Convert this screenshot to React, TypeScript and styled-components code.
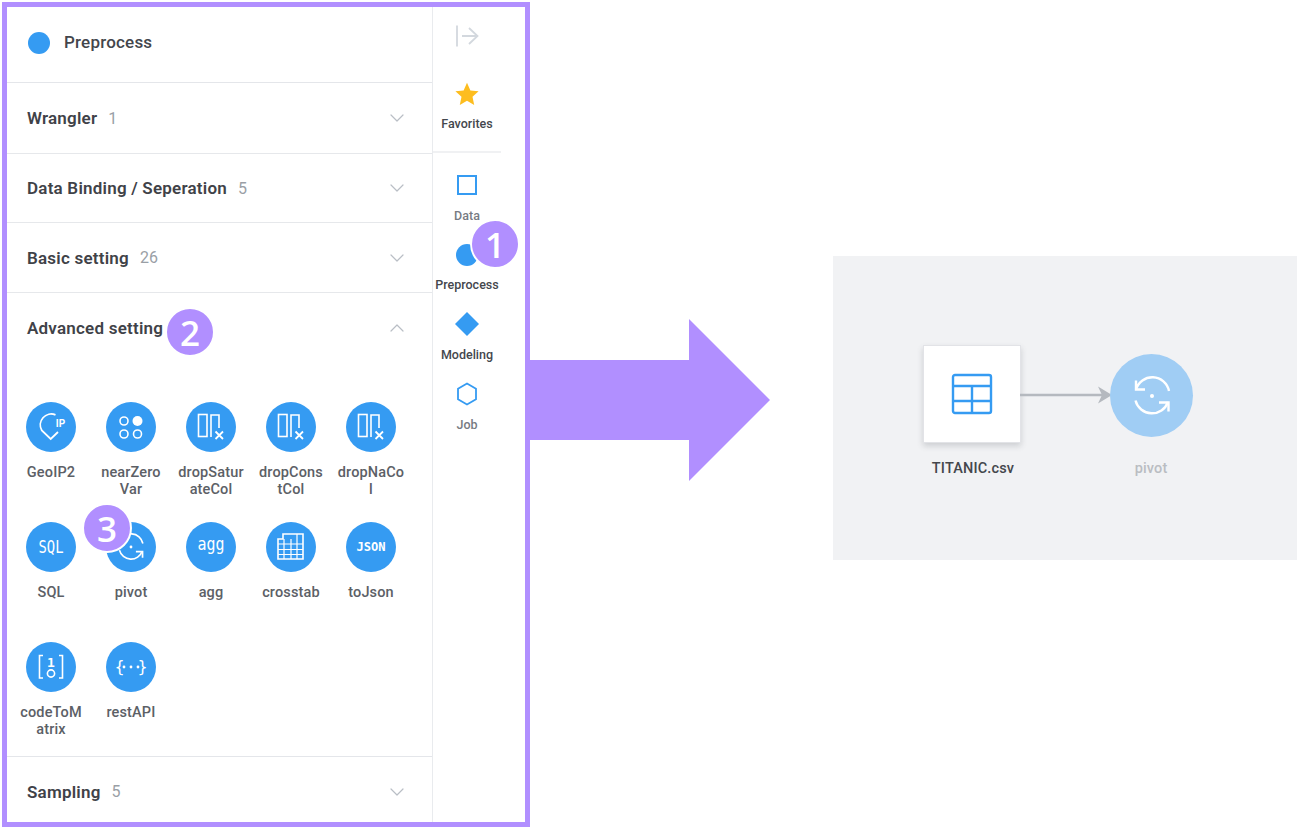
import React from "react";
import styled, { createGlobalStyle } from "styled-components";
import { ChevronDown, ChevronUp } from "lucide-react";

const PURPLE = "#b18fff";
const BLUE = "#359bf2";

const Global = createGlobalStyle`
  html, body { margin: 0; padding: 0; background: #fff; }
  body { font-family: Roboto, "Liberation Sans", sans-serif; overflow: hidden; }
  * { box-sizing: border-box; }
`;

const Stage = styled.div`
  width: 1311px;
  height: 828px;
  padding: 2px 0 0 2px;
  display: flex;
  align-items: flex-start;
`;

const Frame = styled.section`
  position: relative;
  width: 528px;
  height: 825px;
  border: 5px solid ${PURPLE};
  display: flex;
  overflow: hidden;
  background: #fff;
`;

const Panel = styled.div`
  width: 426px;
  height: 100%;
  border-right: 1px solid #e9ebee;
  overflow: hidden;
  display: flex;
  flex-direction: column;
  flex: none;
`;

const PanelHead = styled.header`
  height: 76px;
  flex: none;
  display: flex;
  align-items: center;
  gap: 14px;
  padding: 0 0 6px 21px;
  border-bottom: 1px solid #e4e6ea;
`;

const HeadDot = styled.span`
  width: 22px;
  height: 22px;
  margin-top: 2px;
  border-radius: 50%;
  background: ${BLUE};
`;

const HeadTitle = styled.h1`
  margin: 0;
  font-size: 17px;
  letter-spacing: 0.2px;
  font-weight: 500;
  color: #43464c;
`;

const Row = styled.div<{ $h: number }>`
  height: ${(p) => p.$h}px;
  flex: none;
  display: flex;
  align-items: center;
  padding: 0 23px 0 20px;
  border-bottom: 1px solid #e6e8eb;
`;

const OpenRow = styled(Row)`
  border-bottom: none;
`;

const RowTitle = styled.span`
  font-size: 17px;
  letter-spacing: 0.22px;
  font-weight: 600;
  color: #3f4248;
`;

const RowCount = styled.span`
  margin-left: 11px;
  font-size: 16px;
  color: #9a9fa6;
  flex: 1;
`;

const Grid = styled.div`
  flex: none;
  height: 394px;
  padding: 39px 0 0 4px;
  display: grid;
  grid-template-columns: repeat(5, 80px);
  grid-template-rows: 120px 120px 115px;
  border-bottom: 1px solid #e4e6ea;
`;

const Tool = styled.div`
  display: flex;
  flex-direction: column;
  align-items: center;
`;

const ToolDisc = styled.div`
  width: 50px;
  height: 50px;
  border-radius: 50%;
  background: ${BLUE};
`;

const ToolName = styled.div`
  margin-top: 12px;
  width: 78px;
  font-size: 14.5px;
  letter-spacing: 0.15px;
  line-height: 17px;
  font-weight: 500;
  color: #5c6066;
  text-align: center;
  white-space: pre-line;
`;

const Rail = styled.nav`
  flex: 1;
  display: flex;
  flex-direction: column;
`;

const RailTop = styled.div`
  width: 68px;
  height: 146px;
  flex: none;
  display: flex;
  flex-direction: column;
  align-items: center;
  padding-top: 17px;
  border-bottom: 2px solid #f0f1f3;
`;

const RailItem = styled.div`
  width: 68px;
  height: 69.7px;
  flex: none;
  display: flex;
  flex-direction: column;
  align-items: center;
  padding-top: 20px;
`;

const RailIcon = styled.div`
  width: 24px;
  height: 24px;
  flex: none;
  display: flex;
  align-items: center;
  justify-content: center;
`;

const RailLabel = styled.span<{ $active?: boolean }>`
  margin-top: 11.5px;
  line-height: 14px;
  font-size: 12.5px;
  font-weight: 500;
  white-space: nowrap;
  color: ${(p) => (p.$active ? "#44474d" : "#777b82")};
`;

const FavLabel = styled(RailLabel)`
  margin-top: 11px;
`;

const Collapse = styled.div`
  height: 24px;
  margin-bottom: 34px;
`;

const Badge = styled.span<{ $x: number; $y: number }>`
  position: absolute;
  left: ${(p) => p.$x}px;
  top: ${(p) => p.$y}px;
  width: 50px;
  height: 50px;
  border-radius: 50%;
  border: 2px solid #fff;
  background: ${PURPLE};
  color: #fff;
  font-family: "Open Sans", "Noto Sans", sans-serif;
  font-size: 35px;
  line-height: 1;
  font-weight: 600;
  display: flex;
  align-items: center;
  justify-content: center;
`;

const BigArrow = styled.svg`
  width: 243px;
  height: 162px;
  margin: 317px 0 0 -3px;
  flex: none;
  display: block;
`;

const Canvas = styled.section`
  position: relative;
  margin: 254px 0 0 63px;
  width: 464px;
  height: 304px;
  background: #f1f2f4;
  flex: none;
`;

const DataNode = styled.div`
  position: absolute;
  left: 90px;
  top: 89px;
  width: 98px;
  height: 98px;
  background: #fff;
  border: 1px solid #e2e3e7;
  box-shadow: 0 3px 6px rgba(60, 65, 75, 0.2);
  display: flex;
  align-items: center;
  justify-content: center;
`;

const PivotNode = styled.div`
  position: absolute;
  left: 277px;
  top: 98px;
  width: 83px;
  height: 83px;
  border-radius: 50%;
  background: #a0cdf4;
  display: flex;
  align-items: center;
  justify-content: center;
`;

const Link = styled.svg`
  position: absolute;
  left: 187px;
  top: 130px;
  width: 92px;
  height: 18px;
`;

const NodeLabel = styled.span<{ $x: number; $faded?: boolean }>`
  position: absolute;
  left: ${(p) => p.$x}px;
  top: 204px;
  width: 120px;
  margin-left: -60px;
  text-align: center;
  font-size: 14.5px;
  letter-spacing: 0.15px;
  line-height: 17px;
  font-weight: 500;
  color: ${(p) => (p.$faded ? "#babdc2" : "#44474c")};
`;

const PivotGlyph = ({ size }: { size: number }) => (
  <svg width={size} height={size} viewBox="0 0 40 40" fill="none" stroke="#fff" strokeWidth="2.4">
    <path d="M4 13.5A17 17 0 0 1 37 15" />
    <path d="M4 4.5V13.5H13" />
    <path d="M3.5 24.5A17 17 0 0 0 36 26" />
    <path d="M36.5 35.5V26.5H27" />
    <circle cx="20" cy="20" r="2" fill="#fff" stroke="none" />
  </svg>
);

const line = { fill: "none", stroke: "#fff", strokeWidth: 1.6 } as const;
const mono = { fill: "#fff", textAnchor: "middle", fontFamily: '"DejaVu Sans Mono", monospace' } as const;

const Drop = () => (
  <g {...line}>
    <rect x="12.5" y="12.5" width="8.5" height="22" />
    <path d="M25 35V13H33V26" />
    <path d="M29.5 29.5L37 37M37 29.5L29.5 37" strokeWidth="1.8" />
  </g>
);

const glyphs: Record<string, React.ReactNode> = {
  geo: (
    <>
      <path {...line} strokeWidth={1.8} d="M29.5 12.8A11 11 0 0 0 15.8 28.5L24.7 37L32 30" />
      <text fill="#fff" textAnchor="middle" fontFamily="Roboto, sans-serif" fontWeight={700} x="34.5" y="25" fontSize="10">IP</text>
    </>
  ),
  near: (
    <>
      <circle {...line} cx="18" cy="19" r="4" />
      <circle cx="31.5" cy="19" r="5" fill="#fff" />
      <circle {...line} cx="18" cy="32" r="4" />
      <circle {...line} cx="31.5" cy="32" r="4" />
    </>
  ),
  drop: <Drop />,
  sql: <text {...mono} x="25" y="31" fontSize="17" textLength="25" lengthAdjust="spacingAndGlyphs">SQL</text>,
  pivot: (
    <g transform="translate(11 11)">
      <PivotGlyph size={28} />
    </g>
  ),
  agg: <text {...mono} x="25" y="28" fontSize="18" textLength="27" lengthAdjust="spacingAndGlyphs">agg</text>,
  cross: (
    <g {...line}>
      <path d="M17 12H37V37H12V17H17Z" />
      <path d="M12 22H37M12 27.5H37M12 32.5H37M18 17V37M25 17V37M31 12V37" strokeWidth="1.2" />
    </g>
  ),
  json: <text {...mono} x="25" y="29" fontSize="11.5" fontWeight={700} textLength="29" lengthAdjust="spacingAndGlyphs">JSON</text>,
  code: (
    <>
      <path {...line} d="M17 13.5H13.5V36H17M33 13.5H36.5V36H33" />
      <text {...mono} x="25" y="24.5" fontSize="13" fontWeight={700}>1</text>
      <circle {...line} cx="25" cy="31.5" r="3.6" />
    </>
  ),
  rest: (
    <>
      <text {...mono} x="13.5" y="30" fontSize="16">{"{"}</text>
      <text {...mono} x="36.5" y="30" fontSize="16">{"}"}</text>
      <circle cx="18" cy="25" r="1.4" fill="#fff" />
      <circle cx="25" cy="25" r="1.4" fill="#fff" />
      <circle cx="32" cy="25" r="1.4" fill="#fff" />
    </>
  ),
};

const tools = [
  ["GeoIP2", "geo"],
  ["nearZero\nVar", "near"],
  ["dropSatur\nateCol", "drop"],
  ["dropCons\ntCol", "drop"],
  ["dropNaCo\nl", "drop"],
  ["SQL", "sql"],
  ["pivot", "pivot"],
  ["agg", "agg"],
  ["crosstab", "cross"],
  ["toJson", "json"],
  ["codeToM\natrix", "code"],
  ["restAPI", "rest"],
];

const Chevron = () => <ChevronDown size={24} color="#b9bec5" strokeWidth={1.2} />;

export default function App() {
  return (
    <Stage>
      <Global />
      <Frame>
        <Panel>
          <PanelHead>
            <HeadDot />
            <HeadTitle>Preprocess</HeadTitle>
          </PanelHead>
          <Row $h={71}>
            <RowTitle>Wrangler</RowTitle>
            <RowCount>1</RowCount>
            <Chevron />
          </Row>
          <Row $h={69}>
            <RowTitle>Data Binding / Seperation</RowTitle>
            <RowCount>5</RowCount>
            <Chevron />
          </Row>
          <Row $h={70}>
            <RowTitle>Basic setting</RowTitle>
            <RowCount>26</RowCount>
            <Chevron />
          </Row>
          <OpenRow $h={70}>
            <RowTitle>Advanced setting</RowTitle>
            <RowCount />
            <ChevronUp size={24} color="#b9bec5" strokeWidth={1.2} />
          </OpenRow>
          <Grid>
            {tools.map(([name, glyph]) => (
              <Tool key={name}>
                <ToolDisc>
                  <svg width="50" height="50" viewBox="0 0 50 50">
                    {glyphs[glyph]}
                  </svg>
                </ToolDisc>
                <ToolName>{name}</ToolName>
              </Tool>
            ))}
          </Grid>
          <Row $h={70}>
            <RowTitle>Sampling</RowTitle>
            <RowCount>5</RowCount>
            <Chevron />
          </Row>
        </Panel>
        <Rail>
          <RailTop>
            <Collapse>
              <svg width="24" height="24" viewBox="0 0 24 24" fill="none" stroke="#d3d8de" strokeWidth="1.8">
                <path d="M2 1.5V22.5M7 12H22.5M14 4L22.5 12L14 20" />
              </svg>
            </Collapse>
            <RailIcon>
              <svg width="24" height="24" viewBox="0 0 24 24">
                <path fill="#fdbd1f" d="M12 .8l3.4 7.6 8.2.9-6.1 5.5 1.7 8.1L12 18.8l-7.2 4.1 1.7-8.1L.4 9.3l8.2-.9z" />
              </svg>
            </RailIcon>
            <FavLabel $active>Favorites</FavLabel>
          </RailTop>
          <RailItem>
            <RailIcon>
              <svg width="20" height="20" viewBox="0 0 20 20">
                <rect x="1" y="1" width="18" height="18" fill="none" stroke={BLUE} strokeWidth="2" />
              </svg>
            </RailIcon>
            <RailLabel>Data</RailLabel>
          </RailItem>
          <RailItem>
            <RailIcon>
              <svg width="22" height="22" viewBox="0 0 22 22">
                <circle cx="11" cy="11" r="11" fill={BLUE} />
              </svg>
            </RailIcon>
            <RailLabel $active>Preprocess</RailLabel>
          </RailItem>
          <RailItem>
            <RailIcon>
              <svg width="24" height="24" viewBox="0 0 24 24">
                <path fill={BLUE} d="M12 0L24 12L12 24L0 12Z" />
              </svg>
            </RailIcon>
            <RailLabel $active>Modeling</RailLabel>
          </RailItem>
          <RailItem>
            <RailIcon>
              <svg width="22" height="24" viewBox="0 0 22 24">
                <path fill="none" stroke={BLUE} strokeWidth="1.8" d="M11 1.5L20 6.7V17.3L11 22.5L2 17.3V6.7Z" />
              </svg>
            </RailIcon>
            <RailLabel>Job</RailLabel>
          </RailItem>
        </Rail>
        <Badge $x={463} $y={212}>1</Badge>
        <Badge $x={158} $y={300}>2</Badge>
        <Badge $x={75} $y={496}>3</Badge>
      </Frame>
      <BigArrow viewBox="0 0 243 162">
        <path fill={PURPLE} d="M0 41H162V0L243 81L162 162V121H0Z" />
      </BigArrow>
      <Canvas>
        <DataNode>
          <svg width="42" height="42" viewBox="0 0 42 42" fill="none" stroke={BLUE} strokeWidth="2.4">
            <rect x="2" y="2" width="38" height="38" rx="2" />
            <path d="M2 13H40M2 28H40M21 13V40" />
          </svg>
        </DataNode>
        <Link viewBox="0 0 92 18">
          <path d="M0 9H82" stroke="#b5b9bf" strokeWidth="2.6" />
          <path d="M78 .5L92 9L78 17.5L82 9Z" fill="#b5b9bf" />
        </Link>
        <PivotNode>
          <PivotGlyph size={40} />
        </PivotNode>
        <NodeLabel $x={140}>TITANIC.csv</NodeLabel>
        <NodeLabel $x={318} $faded>pivot</NodeLabel>
      </Canvas>
    </Stage>
  );
}
